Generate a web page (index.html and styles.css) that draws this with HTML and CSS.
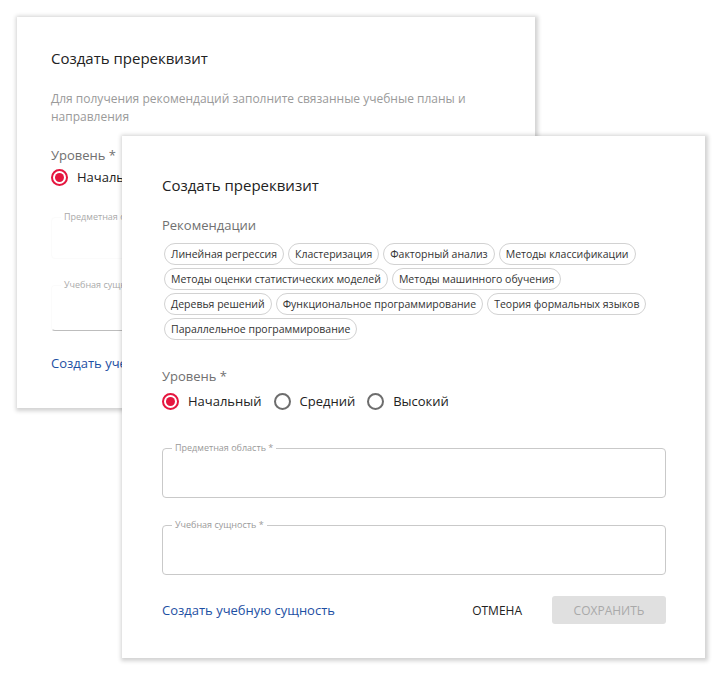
FILE: index.html
```html
<!DOCTYPE html>
<html lang="ru">
<head>
<meta charset="utf-8">
<title>Создать пререквизит</title>
<link rel="stylesheet" href="styles.css">
</head>
<body>
<div class="canvas">
  <div class="dialog back">
    <h2 class="title">Создать пререквизит</h2>
    <p class="desc">Для получения рекомендаций заполните связанные учебные планы и направления</p>
    <div class="label">Уровень *</div>
    <div class="radios">
      <label class="radio"><span class="dot checked"></span><span>Начальный</span></label>
    </div>
    <fieldset class="field faint first"><legend>Предметная область *</legend></fieldset>
    <fieldset class="field faint second"><legend>Учебная сущность *</legend></fieldset>
    <a class="link back-link" href="#">Создать учебную сущность</a>
  </div>

  <div class="dialog front">
    <h2 class="title">Создать пререквизит</h2>
    <div class="label rec">Рекомендации</div>
    <div class="chips">
      <span class="chip">Линейная регрессия</span>
      <span class="chip">Кластеризация</span>
      <span class="chip">Факторный анализ</span>
      <span class="chip">Методы классификации</span>
      <span class="chip">Методы оценки статистических моделей</span>
      <span class="chip">Методы машинного обучения</span>
      <span class="chip">Деревья решений</span>
      <span class="chip">Функциональное программирование</span>
      <span class="chip">Теория формальных языков</span>
      <span class="chip">Параллельное программирование</span>
    </div>
    <div class="label level">Уровень *</div>
    <div class="radios">
      <label class="radio"><span class="dot checked"></span><span>Начальный</span></label>
      <label class="radio"><span class="dot"></span><span>Средний</span></label>
      <label class="radio"><span class="dot"></span><span>Высокий</span></label>
    </div>
    <fieldset class="field f1"><legend>Предметная область *</legend></fieldset>
    <fieldset class="field f2"><legend>Учебная сущность *</legend></fieldset>
    <div class="actions">
      <a class="link" href="#">Создать учебную сущность</a>
      <span class="spacer"></span>
      <button class="btn-cancel" type="button">Отмена</button>
      <button class="btn-save" type="button" disabled>Сохранить</button>
    </div>
  </div>
</div>
</body>
</html>
```

FILE: styles.css
```css
* { box-sizing: border-box; }
html, body {
  margin: 0;
  padding: 0;
  background: #ffffff;
}
body {
  font-family: "Open Sans", "Noto Sans", "DejaVu Sans", sans-serif;
  color: #222;
}
.canvas {
  position: relative;
  width: 720px;
  height: 675px;
  overflow: hidden;
  background: #fff;
}
.dialog {
  position: absolute;
  background: #fff;
  box-shadow: 1px 1px 4px 2px rgba(0, 0, 0, 0.18);
  display: flex;
  flex-direction: column;
  align-items: flex-start;
}
.back {
  left: 17px;
  top: 17px;
  width: 518px;
  height: 391px;
  padding: 31px 0 0 34px;
}
.front {
  left: 122px;
  top: 136px;
  width: 583px;
  height: 522px;
  padding: 39px 39px 0 40px;
}
.title {
  margin: 0;
  font-size: 15px;
  line-height: 20px;
  font-weight: 400;
  color: #222;
}
.desc {
  margin: 22px 0 0;
  width: 420px;
  font-size: 12px;
  line-height: 18px;
  color: #9a9a9a;
}
.label {
  font-size: 13px;
  line-height: 18px;
  color: #707070;
}
.back .label { margin-top: 20px; }
.rec { margin-top: 21px; }
.chips {
  margin-top: 9px;
  padding-left: 2px;
  display: flex;
  flex-wrap: wrap;
  column-gap: 4px;
  row-gap: 3px;
  width: 504px;
}
.chip {
  height: 22px;
  line-height: 20px;
  padding: 0 6px;
  border: 1px solid #d2d2d2;
  border-radius: 11px;
  font-size: 10.5px;
  color: #333;
  white-space: nowrap;
}
.level { margin-top: 27px; }
.radios {
  margin-top: 4px;
  display: flex;
  gap: 12px;
  height: 24px;
  align-items: center;
}
.back .radios { margin-top: 1px; }
.radio {
  display: flex;
  align-items: center;
  gap: 9px;
  font-size: 13px;
  color: #222;
}
.dot {
  width: 17px;
  height: 17px;
  border-radius: 50%;
  border: 2px solid #6d6d6d;
  display: flex;
  align-items: center;
  justify-content: center;
}
.dot.checked { border-color: #e5163f; }
.dot.checked::after {
  content: "";
  width: 9px;
  height: 9px;
  border-radius: 50%;
  background: #e5163f;
}
.field {
  margin: 0;
  padding: 0;
  width: 504px;
  height: 56px;
  border: 1px solid #c9c9c9;
  border-radius: 4px;
}
.field legend {
  margin-left: 9px;
  padding: 0 3px;
  font-size: 9px;
  line-height: 12px;
  color: #9a9a9a;
}
.f1 { margin-top: 29px; }
.f2 { margin-top: 21px; }
.faint {
  width: 470px;
  height: 48px;
  border-color: #fbfbfb;
}
.faint legend { color: #aaa; }
.faint.first { margin-top: 22px; }
.faint.second { margin-top: 20px; height: 52px; border-bottom-color: #bdbdbd; }
.link {
  font-size: 13px;
  line-height: 18px;
  color: #1d4fa3;
  text-decoration: none;
}
.back-link { margin-top: 23px; }
.actions {
  margin-top: 21px;
  width: 504px;
  height: 28px;
  display: flex;
  align-items: center;
}
.spacer { flex: 1; }
.btn-cancel {
  font-family: inherit;
  background: none;
  border: none;
  padding: 0;
  margin-right: 30px;
  font-size: 12px;
  text-transform: uppercase;
  color: #222;
}
.btn-save {
  font-family: inherit;
  width: 114px;
  height: 28px;
  border: none;
  border-radius: 3px;
  background: #e0e0e0;
  color: #a9a9a9;
  font-size: 12px;
  text-transform: uppercase;
}
```
